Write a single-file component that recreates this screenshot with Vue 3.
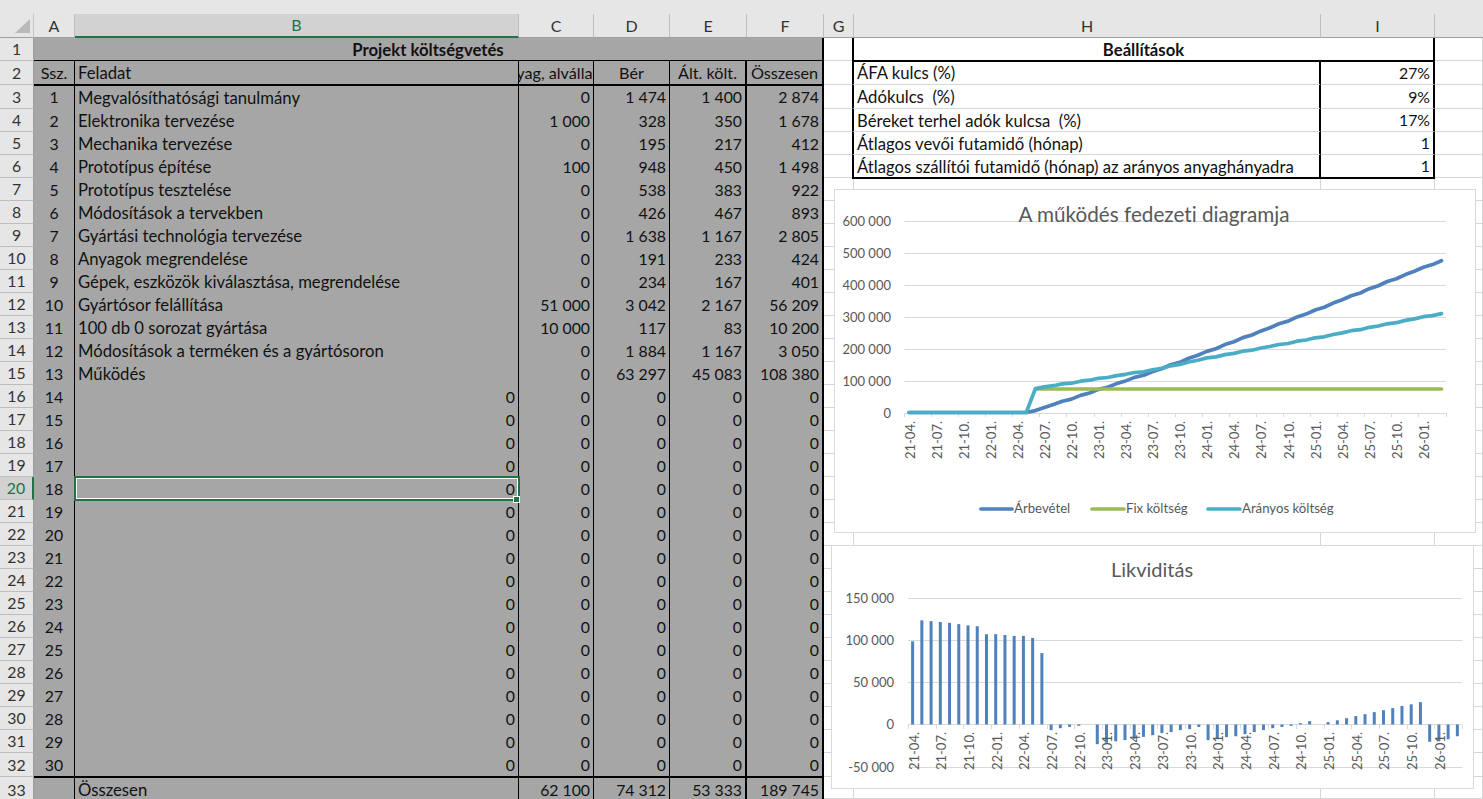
<script setup>
const data = [
  ['Megvalósíthatósági tanulmány', '0', '1 474', '1 400', '2 874'],
  ['Elektronika tervezése', '1 000', '328', '350', '1 678'],
  ['Mechanika tervezése', '0', '195', '217', '412'],
  ['Prototípus építése', '100', '948', '450', '1 498'],
  ['Prototípus tesztelése', '0', '538', '383', '922'],
  ['Módosítások a tervekben', '0', '426', '467', '893'],
  ['Gyártási technológia tervezése', '0', '1 638', '1 167', '2 805'],
  ['Anyagok megrendelése', '0', '191', '233', '424'],
  ['Gépek, eszközök kiválasztása, megrendelése', '0', '234', '167', '401'],
  ['Gyártósor felállítása', '51 000', '3 042', '2 167', '56 209'],
  ['100 db 0 sorozat gyártása', '10 000', '117', '83', '10 200'],
  ['Módosítások a terméken és a gyártósoron', '0', '1 884', '1 167', '3 050'],
  ['Működés', '0', '63 297', '45 083', '108 380']
]
const settings = [
  ['ÁFA kulcs (%)', '27%'],
  ['Adókulcs  (%)', '9%'],
  ['Béreket terhel adók kulcsa  (%)', '17%'],
  ['Átlagos vevői futamidő (hónap)', '1'],
  ['Átlagos szállítói futamidő (hónap) az arányos anyaghányadra', '1']
]
const letters = ['A', 'B', 'C', 'D', 'E', 'F', 'G', 'H', 'I', '']

const cells = []
const push = (text, cls) => cells.push({ text, cls })
function rightPart(r) {
  push('', 'white')
  if (r === 1) {
    push('Beállítások', 'white span2 center bold box-l box-r box-b')
  } else if (r <= 6) {
    const s = settings[r - 2]
    const last = r === 6 ? ' box-b' : ''
    push(s[0], 'white text box-l box-m' + last)
    push(s[1], 'white num box-r' + last)
  } else {
    push('', 'white')
    push('', 'white')
  }
  push('', 'white')
}
for (let r = 1; r <= 33; r++) {
  push(String(r), (r === 20 ? 'rowhead active' : 'rowhead') + (r === 33 ? ' foot' : ''))
  if (r === 1) {
    push('Projekt költségvetés', 'gray span6 center bold thick-b thick-r')
  } else if (r === 2) {
    push('Ssz.', 'gray center hd thin-r thick-b')
    push('Feladat', 'gray text thin-r thick-b')
    push('Anyag, alvállalkozó', 'gray center hd clip thin-r thick-b')
    push('Bér', 'gray center hd thin-r thick-b')
    push('Ált. költ.', 'gray center hd thick-r thick-b')
    push('Összesen', 'gray center hd thick-r thick-b')
  } else if (r === 33) {
    push('', 'gray thin-r')
    push('Összesen', 'gray text thin-r foot')
    push('62 100', 'gray num thin-r foot')
    push('74 312', 'gray num thin-r foot')
    push('53 333', 'gray num thick-r foot')
    push('189 745', 'gray num thick-r foot')
  } else {
    const b = r === 32 ? ' thick-b' : ''
    const d = data[r - 3] || ['0', '0', '0', '0', '0']
    push(String(r - 2), 'gray center idx thin-r' + b)
    push(d[0], (r - 2 > 13 ? 'gray num thin-r' : 'gray text thin-r') + b + (r === 20 ? ' selected' : ''))
    push(d[1], 'gray num thin-r' + b)
    push(d[2], 'gray num thin-r' + b)
    push(d[3], 'gray num thick-r' + b)
    push(d[4], 'gray num thick-r' + b)
  }
  rightPart(r)
}

const labels = []
for (let y = 21; y <= 26; y++) {
  for (const m of ['01.', '04.', '07.', '10.']) {
    const v = `${y}-${m}`
    if (v >= '21-04.' && v <= '26-01.') labels.push(v)
  }
}

/* Chart 1: page coordinates */
const c1 = { x0: 904.5, step: 9.025, zero: 412.5, unit: 31.9 / 100 }
const c1Y = [0, 1, 2, 3, 4, 5, 6].map(i => ({
  y: Math.round(c1.zero - i * 31.9) + 0.5,
  text: i === 0 ? '0' : `${i}00 000`
}))
const cx = i => c1.x0 + c1.step * (i + 0.5)
const cy = v => c1.zero - v * c1.unit
const wob = [0, 1.6, -1.1, 1.2, -0.6, 1.4, -1.3, 0.8]
function interp(pts, i) {
  for (let k = 0; k < pts.length - 1; k++) {
    const [a, va] = pts[k]
    const [b, vb] = pts[k + 1]
    if (i >= a && i <= b) return va + ((vb - va) * (i - a)) / (b - a)
  }
  return 0
}
function line(pts, wobble) {
  const out = []
  for (let i = 0; i < 60; i++) {
    let v = i <= 13 ? 0 : interp(pts, i)
    if (i > 14 && i < 59) v += wob[i % 8] * wobble
    out.push(`${cx(i).toFixed(1)},${cy(v).toFixed(1)}`)
  }
  return out.join(' ')
}
const blueLine = line([[13, 0], [14, 6], [27, 127], [33, 190], [45, 320], [59, 476]], 1)
const tealLine = line([[13, 0], [14, 75], [27, 133], [33, 170], [45, 233], [59, 310]], 0.8)
const greenLine = `${cx(14)},389 ${cx(59)},389`
const legend = [
  { x1: 981, x2: 1012, tx: 1014, color: '#4f81bd', text: 'Árbevétel' },
  { x1: 1092, x2: 1124, tx: 1126, color: '#9bbb59', text: 'Fix költség' },
  { x1: 1208, x2: 1240, tx: 1242, color: '#4bacc6', text: 'Arányos költség' }
]

/* Chart 2 */
const c2 = { x0: 908, step: 9.233, zero: 724.5 }
const c2Y = [
  { y: 598.5, text: '150 000' },
  { y: 640.5, text: '100 000' },
  { y: 682.5, text: '50 000' },
  { y: 724.5, text: '0' },
  { y: 767.5, text: '-50 000' }
]
const barValues = [
  99, 124, 123, 122, 121, 119.5, 118, 117, 107.5, 107.5, 106.5, 105.5, 105.5, 103, 85,
  -6.7, -4.4, -2.8, -1.6, 0, -23.4, -21.8, -20, -18.6, -17, -14.7, -12.7,
  -10.3, -9, -6.7, -5.5, -3, -18.6, -17.5, -15, -14, -11.5, -9, -6.7, -4.4, -3, -1.6,
  1.6, 4, 0, 2.8, 5, 7.5, 10, 12.3, 14.7, 17, 19.5, 22, 24, 26.6, -20.6, -20, -17.5, -14
]
const bars = barValues.map((v, i) => {
  const h = Math.abs(v) * 0.84
  return {
    x: c2.x0 + c2.step * (i + 0.5) - 1.5,
    y: v >= 0 ? c2.zero - h : c2.zero,
    h
  }
})
</script>

<template>
  <div class="sheet">
    <div class="band"></div>
    <div class="cols heads">
      <div class="corner"><span class="tri"></span></div>
      <div
        v-for="(l, i) in letters"
        :key="i"
        class="colhead"
        :class="{ current: l === 'B', last: l === '' }"
      >{{ l }}</div>
    </div>
    <div class="cols body">
      <div v-for="(c, i) in cells" :key="i" class="cell" :class="c.cls"><span class="txt">{{ c.text }}</span></div>
    </div>

    <div class="chart chart-one">
      <svg viewBox="835 190 640 342" width="640" height="342">
        <g class="grid">
          <line v-for="t in c1Y" :key="t.y" x1="904.5" x2="1446" :y1="t.y" :y2="t.y" />
          <line
            v-for="i in 21"
            :key="i"
            :x1="Math.round(904 + (i - 1) * 27.075) + 0.5"
            :x2="Math.round(904 + (i - 1) * 27.075) + 0.5"
            y1="413"
            y2="417"
          />
        </g>
        <text v-for="t in c1Y" :key="t.text" class="axis" x="891" :y="t.y + 4.5" text-anchor="end">{{ t.text }}</text>
        <text
          v-for="(l, i) in labels"
          :key="l"
          class="axis"
          text-anchor="end"
          :transform="`translate(${914.5 + i * 27.075} 421) rotate(-90)`"
        >{{ l }}</text>
        <polyline class="series" stroke="#4f81bd" :points="blueLine" />
        <polyline class="series" stroke="#9bbb59" :points="greenLine" />
        <polyline class="series" stroke="#4bacc6" :points="tealLine" />
        <text class="title title-long" x="1154" y="222" text-anchor="middle">A működés fedezeti diagramja</text>
        <g v-for="l in legend" :key="l.text">
          <line class="series" :stroke="l.color" :x1="l.x1" :x2="l.x2" y1="509" y2="509" />
          <text class="axis legend" :x="l.tx" y="513">{{ l.text }}</text>
        </g>
      </svg>
    </div>

    <div class="chart chart-two">
      <svg viewBox="832 546 641 242" width="641" height="242">
        <g class="grid">
          <line v-for="t in c2Y" :key="t.y" x1="908" x2="1462" :y1="t.y" :y2="t.y" />
          <line
            v-for="i in 21"
            :key="i"
            :x1="Math.round(908 + (i - 1) * 27.7) + 0.5"
            :x2="Math.round(908 + (i - 1) * 27.7) + 0.5"
            y1="725"
            y2="729"
          />
        </g>
        <text v-for="t in c2Y" :key="t.text" class="axis" x="894" :y="t.y + 4.5" text-anchor="end">{{ t.text }}</text>
        <rect v-for="(b, i) in bars" :key="i" class="bar" :x="b.x" :y="b.y" width="3" :height="b.h" />
        <text
          v-for="(l, i) in labels"
          :key="l"
          class="axis"
          text-anchor="end"
          :transform="`translate(${918.5 + i * 27.7} 732) rotate(-90)`"
        >{{ l }}</text>
        <text class="title" x="1152" y="577" text-anchor="middle">Likviditás</text>
      </svg>
    </div>
  </div>
</template>

<style scoped>
.sheet {
  position: relative;
  width: 1483px;
  height: 799px;
  overflow: hidden;
  background: #fff;
  font-family: Lato, "Liberation Sans", sans-serif;
  font-size: 16.7px;
  font-variant-ligatures: none;
  color: #111;
}
.band {
  height: 14px;
  background: #e6e6e6;
}
.cols {
  display: grid;
  grid-template-columns: 34px 41px 444px 75px 76px 77px 77px 30px 467px 114px 48px;
}
.heads {
  height: 24px;
  font-size: 16px;
}
.corner {
  position: relative;
  background: #e6e6e6;
  border-bottom: 1px solid #9f9f9f;
  border-right: 1px solid #c4c4c4;
  box-sizing: border-box;
}
.tri {
  position: absolute;
  left: 15px;
  top: 5px;
  width: 15px;
  height: 14px;
  background: #b9b9b9;
  clip-path: polygon(100% 0, 100% 100%, 0 100%);
}
.colhead {
  box-sizing: border-box;
  display: flex;
  align-items: center;
  justify-content: center;
  background: #e6e6e6;
  border-bottom: 1px solid #9f9f9f;
  border-right: 1px solid #bdbdbd;
  color: #333;
  padding-bottom: 1px;
}
.colhead.last {
  border-right: 0;
}
.colhead.current {
  background: #d2d2d2;
  border-bottom: 2px solid #217346;
  color: #217346;
}
.body {
  grid-template-rows: 23px 24px 24px 23px 23px 23px repeat(25, 23px) 24px 22px;
}
.cell {
  box-sizing: border-box;
  display: flex;
  align-items: center;
  min-width: 0;
  overflow: hidden;
  white-space: pre;
  line-height: 1;
  padding-top: 2px;
}
.gray {
  background: #a6a6a6;
}
.white {
  background: #fff;
  border-right: 1px solid #d6d6d6;
  border-bottom: 1px solid #d6d6d6;
}
.rowhead {
  justify-content: center;
  background: #e6e6e6;
  border-right: 1px solid #9f9f9f;
  border-bottom: 1px solid #bdbdbd;
  color: #333;
  font-size: 15.8px;
  padding-top: 0;
}
.rowhead.active {
  background: #d2d2d2;
  border-right: 2px solid #217346;
  color: #217346;
}
.text {
  padding-left: 3px;
}
.num {
  justify-content: flex-end;
  padding-right: 3px;
  padding-top: 0;
  font-size: 15.8px;
}
.idx {
  font-size: 15.8px;
  padding-top: 0;
}
.hd {
  font-size: 16.2px;
}
.clip {
  padding-left: 14px;
}
.center {
  justify-content: center;
}
.bold {
  font-weight: 700;
  padding-top: 3px;
}
.span6 {
  grid-column: span 6;
}
.span2 {
  grid-column: span 2;
}
.thin-r {
  border-right: 1px solid #000;
}
.thick-r {
  border-right: 2px solid #000;
}
.thick-b,
.box-b {
  position: relative;
  z-index: 1;
  overflow: visible;
  border-bottom: 1px solid #000;
  box-shadow: 0 1px 0 #000;
}
.hd.thick-b {
  overflow: hidden;
}
.box-l {
  border-left: 2px solid #000;
  margin-left: -2px;
}
.box-m {
  border-right: 2px solid #000;
}
.box-r {
  border-right: 2px solid #000;
}
.foot {
  padding-top: 4px;
  border-bottom: 0;
}
.selected {
  position: relative;
  overflow: visible;
  z-index: 2;
  border: 0;
  padding-right: 4px;
  outline: 2px solid #217346;
  outline-offset: -1px;
  box-shadow: inset 0 0 0 2px #fff;
}
.selected::after {
  content: "";
  position: absolute;
  right: -1px;
  bottom: -3px;
  width: 5px;
  height: 5px;
  background: #217346;
  border: 1px solid #fff;
  box-sizing: content-box;
}
.chart {
  position: absolute;
  background: #fff;
  border: 1px solid #d9d9d9;
  z-index: 3;
}
.chart svg {
  display: block;
}
.chart-one {
  left: 834px;
  top: 189px;
}
.chart-two {
  left: 831px;
  top: 545px;
}
.grid line {
  stroke: #d9d9d9;
  stroke-width: 1;
}
.axis {
  font-family: Lato, "Liberation Sans", sans-serif;
  font-size: 13px;
  fill: #595959;
}
.legend {
  font-size: 13.2px;
}
.title {
  font-family: Lato, "Liberation Sans", sans-serif;
  font-size: 20px;
  fill: #595959;
}
.title-long {
  font-size: 20.7px;
}
.series {
  fill: none;
  stroke-width: 3.7;
  stroke-linecap: round;
  stroke-linejoin: round;
}
.bar {
  fill: #4f81bd;
}
</style>
